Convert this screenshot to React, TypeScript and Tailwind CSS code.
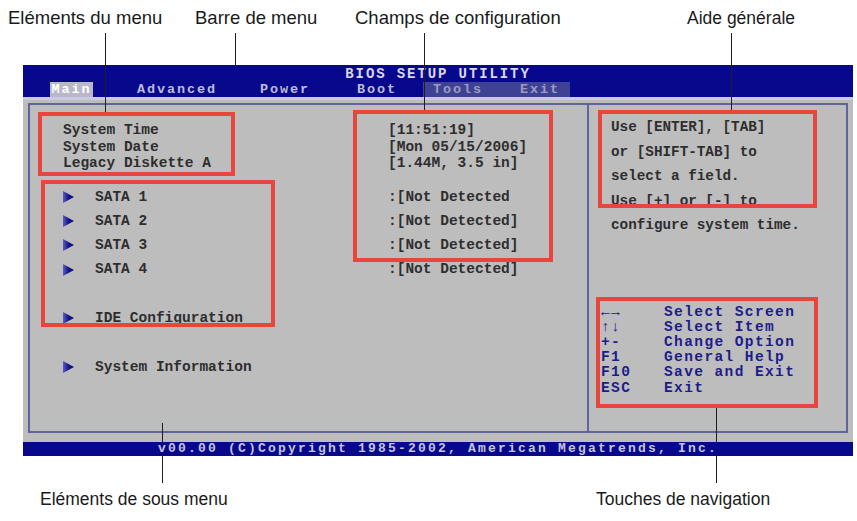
import React from 'react';

const MONO = "font-['Liberation_Mono',monospace]";

const Arrow = () => (
  <svg width="11" height="12" viewBox="0 0 11 12" className="shrink-0">
    <defs>
      <linearGradient id="tri" x1="0" y1="0" x2="1" y2="0">
        <stop offset="0" stopColor="#5a5ac8" />
        <stop offset="0.5" stopColor="#14148c" />
        <stop offset="1" stopColor="#0c0c70" />
      </linearGradient>
    </defs>
    <polygon points="0,0 11,6 0,12" fill="url(#tri)" />
  </svg>
);

const topRows = [
  ['System Time', '[11:51:19]'],
  ['System Date', '[Mon 05/15/2006]'],
  ['Legacy Diskette A', '[1.44M, 3.5 in]'],
];

const subRows: (null | [string, string])[] = [
  ['SATA 1', ':[Not Detected'],
  ['SATA 2', ':[Not Detected]'],
  ['SATA 3', ':[Not Detected]'],
  ['SATA 4', ':[Not Detected]'],
  null,
  ['IDE Configuration', ''],
  null,
  ['System Information', ''],
];

const help = [
  'Use [ENTER], [TAB]',
  'or [SHIFT-TAB] to',
  'select a field.',
  'Use [+] or [-] to',
  'configure system time.',
];

const keys = [
  ['←→', 'Select Screen'],
  ['↑↓', 'Select Item'],
  ['+-', 'Change Option'],
  ['F1', 'General Help'],
  ['F10', 'Save and Exit'],
  ['ESC', 'Exit'],
];

const BiosScreen = () => (
  <div className={`w-[830px] ${MONO} font-bold`}>
    {/* Header */}
    <div className="h-[32px] bg-[#08088c] pt-px">
      <div className="h-[16px] leading-[16px] text-center text-[14px] tracking-[1.9px] text-[#d8d8ea]">
        BIOS SETUP UTILITY
      </div>
      <div className="flex h-[15px] pl-[27px] text-[13.5px] leading-[15px] tracking-[1.9px] text-[#bcbcd6]">
        <div className="w-[43px] bg-[#b8b8c8] text-white text-center">Main</div>
        <div className="w-[167px] pl-[44px]">Advanced</div>
        <div className="w-[97px]">Power</div>
        <div className="w-[66px]">Boot</div>
        <div className="w-[147px] flex bg-[#3f4294] text-[#9c9cc0]">
          <span className="pl-[10px] w-[97px]">Tools</span>
          <span>Exit</span>
        </div>
      </div>
    </div>

    {/* Body */}
    <div className="h-[345px] bg-[#bdbdbd] border-t-[3px] border-[#c9c9e2] px-[5px] pt-[3px]">
      <div className="flex h-[330px]">
        <div className="w-[561px] border-2 border-[#63639c] pt-[17px] pl-[33px] text-[14.5px] text-[#2e2e2e]">
          <div className="leading-[16.5px]">
            {topRows.map(([l, v]) => (
              <div key={l} className="flex">
                <span className="w-[325px]">{l}</span>
                <span>{v}</span>
              </div>
            ))}
          </div>
          <div className="mt-[13px] leading-[24.3px]">
            {subRows.map((r, i) =>
              r ? (
                <div key={i} className="flex items-center h-[24.3px]">
                  <div className="w-[325px] flex items-center">
                    <Arrow />
                    <span className="ml-[21px]">{r[0]}</span>
                  </div>
                  <span>{r[1]}</span>
                </div>
              ) : (
                <div key={i} className="h-[24.3px]" />
              )
            )}
          </div>
        </div>
        <div className="w-[259px] border-2 border-l-0 border-[#63639c] flex flex-col">
          <div className="pt-[10px] pl-[22px] text-[14.3px] leading-[24.5px] text-[#2e2e2e]">
            {help.map((h) => (
              <div key={h}>{h}</div>
            ))}
          </div>
          <div className="mt-[67px] pl-[12px] text-[14.5px] leading-[15.2px] tracking-[1.4px] text-[#1c1c8a]">
            {keys.map(([k, d]) => (
              <div key={k} className="flex">
                <span className="w-[63px]">{k}</span>
                <span>{d}</span>
              </div>
            ))}
          </div>
        </div>
      </div>
    </div>

    {/* Footer */}
    <div className="h-[14px] bg-[#08088c] text-center text-[13px] leading-[14px] tracking-[2.2px] text-[#c4c4da]">
      v00.00 (C)Copyright 1985-2002, American Megatrends, Inc.
    </div>
  </div>
);

const boxes = [
  'left-[38px] top-[112px] w-[197px] h-[64px]',
  'left-[41px] top-[180px] w-[234px] h-[147px]',
  'left-[353px] top-[110px] w-[200px] h-[152px]',
  'left-[598px] top-[110px] w-[219px] h-[98px]',
  'left-[596px] top-[297px] w-[222px] h-[111px]',
];

// leader lines; the two bottom ones are broken by the footer bar
const lines = [
  'left-[105px] top-[33px] h-[79px]',
  'left-[235px] top-[33px] h-[32px]',
  'left-[424px] top-[33px] h-[77px]',
  'left-[731px] top-[33px] h-[77px]',
  'left-[162px] top-[423px] h-[19px]',
  'left-[162px] top-[456px] h-[27px]',
  'left-[716px] top-[408px] h-[34px]',
  'left-[716px] top-[456px] h-[27px]',
];

const labels = [
  ['left-[8px] top-[8px] text-[18.5px]', 'Eléments du menu'],
  ['left-[195px] top-[8px] text-[18.5px]', 'Barre de menu'],
  ['left-[355px] top-[8px] text-[18.5px]', 'Champs de configuration'],
  ['left-[687px] top-[8px] text-[17.5px]', 'Aide générale'],
  ['left-[40px] top-[489px] text-[17.5px]', 'Eléments de sous menu'],
  ['left-[596px] top-[489px] text-[17.5px]', 'Touches de navigation'],
];

export default function App() {
  return (
    <div className="relative w-[857px] h-[521px] bg-white overflow-hidden font-['Liberation_Sans',Arial,sans-serif]">
      <div className="pt-[65px] pl-[23px]">
        <BiosScreen />
      </div>
      {lines.map((c) => (
        <div key={c} className={`absolute w-px bg-[#1e1e1e] ${c}`} />
      ))}
      {boxes.map((c) => (
        <div key={c} className={`absolute border-[4px] border-[#e8453c] ${c}`} />
      ))}
      {labels.map(([c, t]) => (
        <div key={t} className={`absolute leading-[20px] text-[#1a1a1a] ${c}`}>
          {t}
        </div>
      ))}
    </div>
  );
}
